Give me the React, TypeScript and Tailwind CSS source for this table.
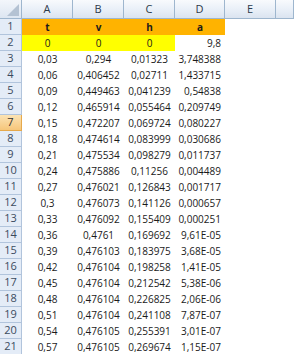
const cols = ['A', 'B', 'C', 'D', 'E', '']

const rows: [string, string, string, string][] = [
  ['0,03', '0,294', '0,01323', '3,748388'],
  ['0,06', '0,406452', '0,02711', '1,433715'],
  ['0,09', '0,449463', '0,041239', '0,54838'],
  ['0,12', '0,465914', '0,055464', '0,209749'],
  ['0,15', '0,472207', '0,069724', '0,080227'],
  ['0,18', '0,474614', '0,083999', '0,030686'],
  ['0,21', '0,475534', '0,098279', '0,011737'],
  ['0,24', '0,475886', '0,11256', '0,004489'],
  ['0,27', '0,476021', '0,126843', '0,001717'],
  ['0,3', '0,476073', '0,141126', '0,000657'],
  ['0,33', '0,476092', '0,155409', '0,000251'],
  ['0,36', '0,4761', '0,169692', '9,61E-05'],
  ['0,39', '0,476103', '0,183975', '3,68E-05'],
  ['0,42', '0,476104', '0,198258', '1,41E-05'],
  ['0,45', '0,476104', '0,212542', '5,38E-06'],
  ['0,48', '0,476104', '0,226825', '2,06E-06'],
  ['0,51', '0,476104', '0,241108', '7,87E-07'],
  ['0,54', '0,476105', '0,255391', '3,01E-07'],
  ['0,57', '0,476105', '0,269674', '1,15E-07'],
]

const grid = 'grid grid-cols-[22px_51px_51px_51px_50px_51px_1fr]'

function RowHead({ n, active }: { n: number; active?: boolean }) {
  return (
    <div
      className={`h-4 flex items-center justify-center border-r border-b text-[11px] ${
        active
          ? 'bg-gradient-to-b from-[#fbe3b4] to-[#f6c67a] border-[#e6a94c] text-[#333]'
          : 'bg-[#e4ecf7] border-[#b1c4dc] text-[#3b4b5e]'
      }`}
    >
      {n}
    </div>
  )
}

function Cell({ v, align = 'center', className = '' }: { v?: string; align?: 'center' | 'right'; className?: string }) {
  return (
    <div
      className={`h-4 flex items-center px-1 whitespace-nowrap ${align === 'right' ? 'justify-end' : 'justify-center'} ${className}`}
    >
      {v}
    </div>
  )
}

export default function App() {
  return (
    <div
      className="w-[294px] h-[354px] overflow-hidden bg-white text-[10px] text-[#1a1a1a]"
      style={{ fontFamily: '"Open Sans", "Liberation Sans", sans-serif' }}
    >
      {/* column headers */}
      <div className={`${grid} h-[19px]`}>
        <div className="relative border-r border-b border-[#9eb6ce] bg-gradient-to-b from-[#f3f6fb] to-[#dde6f2]">
          <svg className="absolute right-[2px] bottom-[2px]" width="12" height="12" viewBox="0 0 12 12">
            <polygon points="12,0 12,12 0,12" fill="#b4c2d3" />
          </svg>
        </div>
        {cols.map((c, i) => (
          <div
            key={i}
            className="flex items-center justify-center border-r border-b border-[#9eb6ce] bg-gradient-to-b from-[#f8fafd] via-[#eaf0f8] to-[#dbe4f0] text-[11px] text-[#2c3a4c]"
          >
            {c}
          </div>
        ))}
      </div>

      {/* row 1 */}
      <div className={grid}>
        <RowHead n={1} />
        <Cell v="t" className="bg-[#ffb300] font-bold" />
        <Cell v="v" className="bg-[#ffb300] font-bold" />
        <Cell v="h" className="bg-[#ffb300] font-bold" />
        <Cell v="a" className="bg-[#ffb300] font-bold" />
        <Cell />
        <Cell />
      </div>

      {/* row 2 */}
      <div className={grid}>
        <RowHead n={2} />
        <Cell v="0" className="bg-[#ffff00]" />
        <Cell v="0" className="bg-[#ffff00]" />
        <Cell v="0" className="bg-[#ffff00]" />
        <Cell v="9,8" align="right" />
        <Cell />
        <Cell />
      </div>

      {rows.map((r, i) => (
        <div key={i} className={grid}>
          <RowHead n={i + 3} active={i + 3 === 7} />
          <Cell v={r[0]} />
          <Cell v={r[1]} />
          <Cell v={r[2]} />
          <Cell v={r[3]} align="right" />
          <Cell />
          <Cell />
        </div>
      ))}
    </div>
  )
}
